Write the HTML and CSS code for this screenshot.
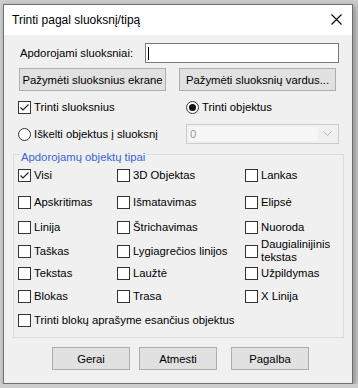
FILE: index.html
```html
<!DOCTYPE html>
<html lang="lt">
<head>
    <meta charset="UTF-8">
    <meta name="viewport" content="width=device-width, initial-scale=1.0">
    <title>Trinti pagal sluoksnį/tipą</title>
    <link rel="stylesheet" href="styles.css">
</head>
<body>

    <div class="window">
        <div class="titlebar">
            <span class="title">Trinti pagal sluoksnį/tipą</span>
            <svg class="close" width="11" height="11" viewBox="0 0 11 11">
                <path d="M0.5 0.5L10.5 10.5M10.5 0.5L0.5 10.5" stroke="#000" stroke-width="1.1" fill="none"/>
            </svg>
        </div>

        <div class="content">
            <div class="layer-row">
                <label class="layer-label">Apdorojami sluoksniai:</label>
                <div class="textbox"><span class="caret"></span></div>
            </div>

            <div class="pick-row">
                <button class="btn btn-screen">Pažymėti sluoksnius ekrane</button>
                <button class="btn btn-names">Pažymėti sluoksnių vardus...</button>
            </div>

            <div class="mode-row">
                <label class="check">
                    <span class="box">
                        <svg width="11" height="11" viewBox="0 0 11 11"><path d="M1.5 5.5L4 8L9.5 2.5" stroke="#222" stroke-width="1.2" fill="none"/></svg>
                    </span>
                    Trinti sluoksnius
                </label>
                <label class="check radio-top"><span class="radio checked"></span>Trinti objektus</label>
            </div>

            <div class="mode-row move-row">
                <label class="check"><span class="radio"></span>Iškelti objektus į sluoksnį</label>
                <div class="combo">
                    <span class="combo-value">0</span>
                    <svg class="combo-arrow" width="9" height="6" viewBox="0 0 9 6"><path d="M0.5 0.5L4.5 4.5L8.5 0.5" stroke="#b5b5b5" stroke-width="1" fill="none"/></svg>
                </div>
            </div>

            <fieldset class="types">
                <legend>Apdorojamų objektų tipai</legend>
                <div class="type-grid">
                    <label class="check">
                        <span class="box">
                            <svg width="11" height="11" viewBox="0 0 11 11"><path d="M1.5 5.5L4 8L9.5 2.5" stroke="#222" stroke-width="1.2" fill="none"/></svg>
                        </span>
                        Visi
                    </label>
                    <label class="check"><span class="box"></span>3D Objektas</label>
                    <label class="check"><span class="box"></span>Lankas</label>

                    <label class="check"><span class="box"></span>Apskritimas</label>
                    <label class="check"><span class="box"></span>Išmatavimas</label>
                    <label class="check"><span class="box"></span>Elipsė</label>

                    <label class="check"><span class="box"></span>Linija</label>
                    <label class="check"><span class="box"></span>Štrichavimas</label>
                    <label class="check"><span class="box"></span>Nuoroda</label>

                    <label class="check"><span class="box"></span>Taškas</label>
                    <label class="check"><span class="box"></span>Lygiagrečios linijos</label>
                    <label class="check multi"><span class="box"></span><span class="text">Daugialinijinis<br>tekstas</span></label>

                    <label class="check"><span class="box"></span>Tekstas</label>
                    <label class="check"><span class="box"></span>Laužtė</label>
                    <label class="check"><span class="box"></span>Užpildymas</label>

                    <label class="check"><span class="box"></span>Blokas</label>
                    <label class="check"><span class="box"></span>Trasa</label>
                    <label class="check"><span class="box"></span>X Linija</label>
                </div>
                <label class="check"><span class="box"></span>Trinti blokų aprašyme esančius objektus</label>
            </fieldset>

            <div class="actions">
                <button class="btn btn-ok">Gerai</button>
                <button class="btn btn-cancel">Atmesti</button>
                <button class="btn btn-help">Pagalba</button>
            </div>
        </div>
    </div>

</body>
</html>
```

FILE: styles.css
```css
body {
    margin: 0;
    padding: 0;
    background: #cdcdcd;
    font-family: "Liberation Sans", Arial, sans-serif;
    font-size: 11.3px;
    color: #000;
}

.window {
    box-sizing: border-box;
    width: 350px;
    height: 380px;
    margin: 4px 0 0 3px;
    background: #f0f0f0;
    border: 1px solid #707070;
    box-shadow: 2px 2px 6px rgba(0, 0, 0, 0.35);
}

.titlebar {
    display: flex;
    align-items: center;
    height: 30px;
    padding: 0 10px 0 8px;
    background: #fff;
}

.title {
    font-size: 12px;
    flex: 1;
}

.close {
    margin-top: -1px;
}

.content {
    padding: 8px 13px 0 14px;
}

.layer-row {
    display: flex;
    align-items: center;
    height: 20px;
}

.layer-label {
    margin-left: 2px;
}

.textbox {
    box-sizing: border-box;
    display: flex;
    align-items: center;
    width: 194px;
    height: 20px;
    margin-left: auto;
    padding-left: 2px;
    background: #fff;
    border: 1px solid #7a7a7a;
}

.caret {
    width: 1px;
    height: 13px;
    background: #000;
}

.pick-row {
    display: flex;
    margin-top: 5px;
}

.btn {
    box-sizing: border-box;
    height: 23px;
    padding: 0;
    font-family: inherit;
    font-size: inherit;
    color: #000;
    background: #e1e1e1;
    border: 1px solid #adadad;
    white-space: nowrap;
}

.btn-screen {
    width: 147px;
    margin-left: 1px;
}

.btn-names {
    width: 157px;
    margin-left: 13px;
}

.mode-row {
    display: grid;
    grid-template-columns: 168px 1fr;
    margin-top: 9px;
}

.move-row {
    align-items: center;
    margin-top: 10px;
}

.check {
    display: flex;
    align-items: center;
    line-height: 13px;
    white-space: nowrap;
}

.radio-top {
    margin-top: 1px;
}

.box, .radio {
    box-sizing: border-box;
    flex: none;
    display: flex;
    align-items: center;
    justify-content: center;
    width: 13px;
    height: 13px;
    margin-right: 3px;
    background: #fff;
    border: 1px solid #333;
}

.radio {
    border-radius: 50%;
}

.radio.checked::after {
    content: "";
    width: 7px;
    height: 7px;
    border-radius: 50%;
    background: #111;
}

.combo {
    box-sizing: border-box;
    display: flex;
    align-items: center;
    width: 153px;
    height: 20px;
    padding: 2px;
    background: #f0f0f0;
    border: 1px solid #cccccc;
}

.combo-value {
    flex: 1;
    align-self: stretch;
    padding-left: 1px;
    line-height: 14px;
    color: #9a9a9a;
    background: #f6f6f6;
    margin-right: 5px;
}

.combo-arrow {
    margin-right: 4px;
}

.types {
    box-sizing: border-box;
    width: 331px;
    min-width: 0;
    margin: 1px 0 0 -5px;
    padding: 5px 0 10px 4px;
    border: 1px solid #dcdcdc;
}

.types legend {
    margin-left: 2px;
    padding: 6px 2px 0 1px;
    line-height: 13px;
    color: #3a63d8;
}

.type-grid {
    display: grid;
    grid-template-columns: 99px 128px 1fr;
    grid-template-rows: 27px 25px 24px 22px 23px 24px;
    align-items: start;
}

.check.multi {
    align-items: flex-start;
}

.check.multi .text {
    margin-top: -7px;
}

.actions {
    display: flex;
    margin-top: 9px;
}

.actions .btn {
    width: 78px;
}

.btn-ok {
    margin-left: 34px;
}

.btn-cancel {
    margin-left: 9px;
}

.btn-help {
    margin-left: 14px;
}
```
